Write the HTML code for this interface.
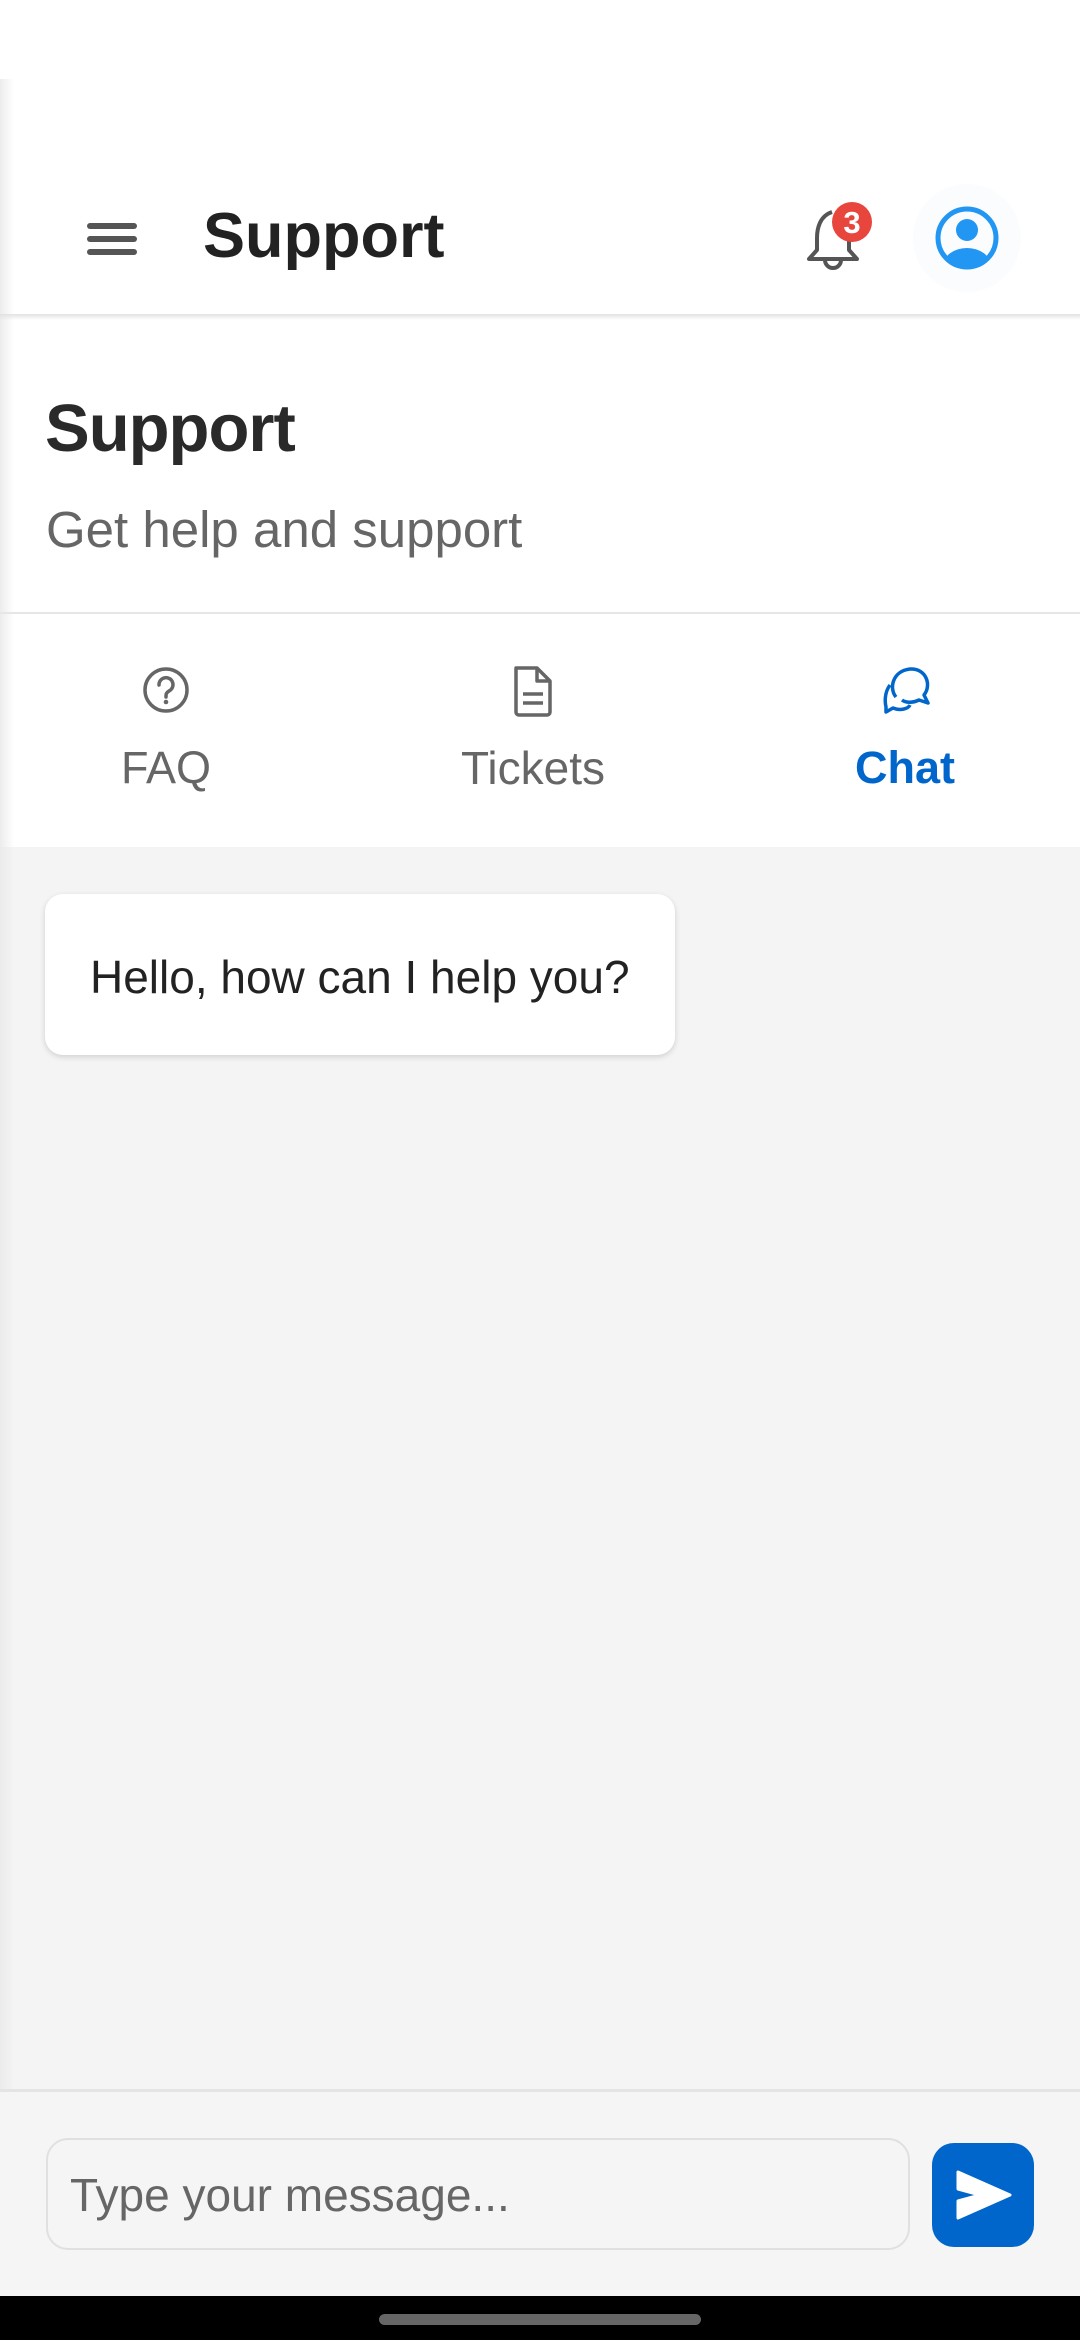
<!DOCTYPE html>
<html><head><meta charset="utf-8"><style>
*{margin:0;padding:0;box-sizing:border-box}
body{width:1080px;height:2340px;position:relative;background:#fff;font-family:"Liberation Sans",Roboto,sans-serif;overflow:hidden}
.abs{position:absolute}
.t{white-space:nowrap}
</style></head><body>
<div class="abs" style="left:0;top:79px;width:14px;height:2217px;background:linear-gradient(to right,#ececec,rgba(255,255,255,0))"></div>
<!-- header -->
<div class="abs" style="left:0;top:314px;width:1080px;height:6px;background:linear-gradient(#e2e2e2,rgba(255,255,255,0))"></div>
<div class="abs" style="left:87px;top:223px;width:50px;height:6px;background:#555;border-radius:3px"></div>
<div class="abs" style="left:87px;top:236px;width:50px;height:6px;background:#555;border-radius:3px"></div>
<div class="abs" style="left:87px;top:249px;width:50px;height:6px;background:#555;border-radius:3px"></div>
<div class="abs t" style="left:203px;top:198px;font-size:63px;font-weight:bold;color:#222;line-height:76px">Support</div>
<svg class="abs" style="left:800px;top:200px" width="80" height="80" viewBox="0 0 80 80">
<path d="M32 12 C20 16 17 28 17 38 L17 50 L9 59 L57 59 L49 50 L49 38" fill="none" stroke="#555" stroke-width="4" stroke-linejoin="round"/>
<path d="M25 60 a8 8 0 0 0 16 0" fill="none" stroke="#555" stroke-width="4"/>
<circle cx="52" cy="22" r="20" fill="#e8453c"/>
<text x="52" y="33" text-anchor="middle" font-family="Liberation Sans" font-weight="bold" font-size="31" fill="#fff">3</text>
</svg>
<div class="abs" style="left:913px;top:184px;width:108px;height:108px;border-radius:50%;background:#fafcfe"></div>
<svg class="abs" style="left:933px;top:204px" width="68" height="68" viewBox="0 0 68 68">
<defs><clipPath id="c"><circle cx="34" cy="34" r="28"/></clipPath></defs>
<circle cx="34" cy="34" r="29" fill="none" stroke="#2196f3" stroke-width="5"/>
<circle cx="34" cy="26" r="11" fill="#2196f3"/>
<ellipse cx="34" cy="62" rx="24" ry="18" fill="#2196f3" clip-path="url(#c)"/>
</svg>
<!-- page title -->
<div class="abs t" style="left:45px;top:389px;font-size:67px;font-weight:bold;color:#2a2a2a;letter-spacing:-1px;line-height:80px">Support</div>
<div class="abs t" style="left:46px;top:500px;font-size:51px;color:#666;line-height:60px">Get help and support</div>
<div class="abs" style="left:0;top:612px;width:1080px;height:2px;background:#e6e6e6"></div>
<!-- tabs -->
<svg class="abs" style="left:141px;top:665px" width="50" height="50" viewBox="0 0 50 50">
<circle cx="25" cy="25" r="21" fill="none" stroke="#666" stroke-width="3.5"/>
<path d="M18 20 a7 7 0 1 1 10 6 c-3 2 -3 3 -3 6" fill="none" stroke="#666" stroke-width="3.5" stroke-linecap="round"/>
<circle cx="25" cy="37" r="2.3" fill="#666"/>
</svg>
<svg class="abs" style="left:510px;top:664px" width="46" height="54" viewBox="0 0 46 54">
<path d="M6 4 H27 L40 17 V48 a3 3 0 0 1 -3 3 H9 a3 3 0 0 1 -3 -3 Z" fill="none" stroke="#666" stroke-width="3.5" stroke-linejoin="round"/>
<path d="M27 4 V17 H40" fill="none" stroke="#666" stroke-width="3.5" stroke-linejoin="round"/>
<path d="M13 30 H33 M13 39 H33" stroke="#666" stroke-width="3.5"/>
</svg>
<svg class="abs" style="left:880px;top:663px" width="54" height="54" viewBox="0 0 54 54">
<path d="M16 34 C9 26 12 8 30 6 C46 5 52 22 44 32 L48 40 L39 37 C33 40 26 40 22 37" fill="none" stroke="#0066cc" stroke-width="3.5" stroke-linejoin="round"/>
<path d="M10 22 C4 30 5 40 6 44 L6 49 L13 45 C20 48 28 46 30 42" fill="none" stroke="#0066cc" stroke-width="3.5" stroke-linejoin="round"/>
</svg>
<div class="abs t" style="left:66px;top:740px;width:200px;text-align:center;font-size:45px;color:#666;line-height:56px">FAQ</div>
<div class="abs t" style="left:408px;top:740px;width:250px;text-align:center;font-size:46px;color:#666;line-height:56px">Tickets</div>
<div class="abs t" style="left:805px;top:740px;width:200px;text-align:center;font-size:45px;font-weight:bold;color:#0066cc;line-height:56px">Chat</div>
<!-- chat area -->
<div class="abs" style="left:0;top:847px;width:1080px;height:1242px;background:#f4f4f4"></div>
<div class="abs" style="left:0;top:847px;width:14px;height:1449px;background:linear-gradient(to right,#ebebeb,rgba(244,244,244,0))"></div>
<div class="abs" style="left:45px;top:894px;width:630px;height:161px;background:#fff;border-radius:18px;box-shadow:0 2px 6px rgba(0,0,0,0.15)"></div>
<div class="abs t" style="left:90px;top:948px;font-size:46px;color:#222;line-height:58px">Hello, how can I help you?</div>
<!-- input area -->
<div class="abs" style="left:0;top:2089px;width:1080px;height:207px;background:#f5f5f5;border-top:3px solid #e4e4e4"></div>
<div class="abs" style="left:46px;top:2138px;width:864px;height:112px;border:2px solid #e0e0e0;border-radius:22px;background:#f5f5f5"></div>
<div class="abs t" style="left:70px;top:2166px;font-size:46px;color:#666;line-height:58px">Type your message...</div>
<div class="abs" style="left:932px;top:2143px;width:102px;height:104px;background:#0066cc;border-radius:22px"></div>
<svg class="abs" style="left:956px;top:2170px" width="56" height="50" viewBox="0 0 56 50">
<path d="M2 2 L54 25 L2 48 L2 31 L24 25 L2 19 Z" fill="#fff" stroke="#fff" stroke-width="3" stroke-linejoin="round"/>
</svg>
<!-- nav bar -->
<div class="abs" style="left:0;top:2296px;width:1080px;height:44px;background:#000"></div>
<div class="abs" style="left:379px;top:2314px;width:322px;height:11px;background:#666;border-radius:6px"></div>
</body></html>
